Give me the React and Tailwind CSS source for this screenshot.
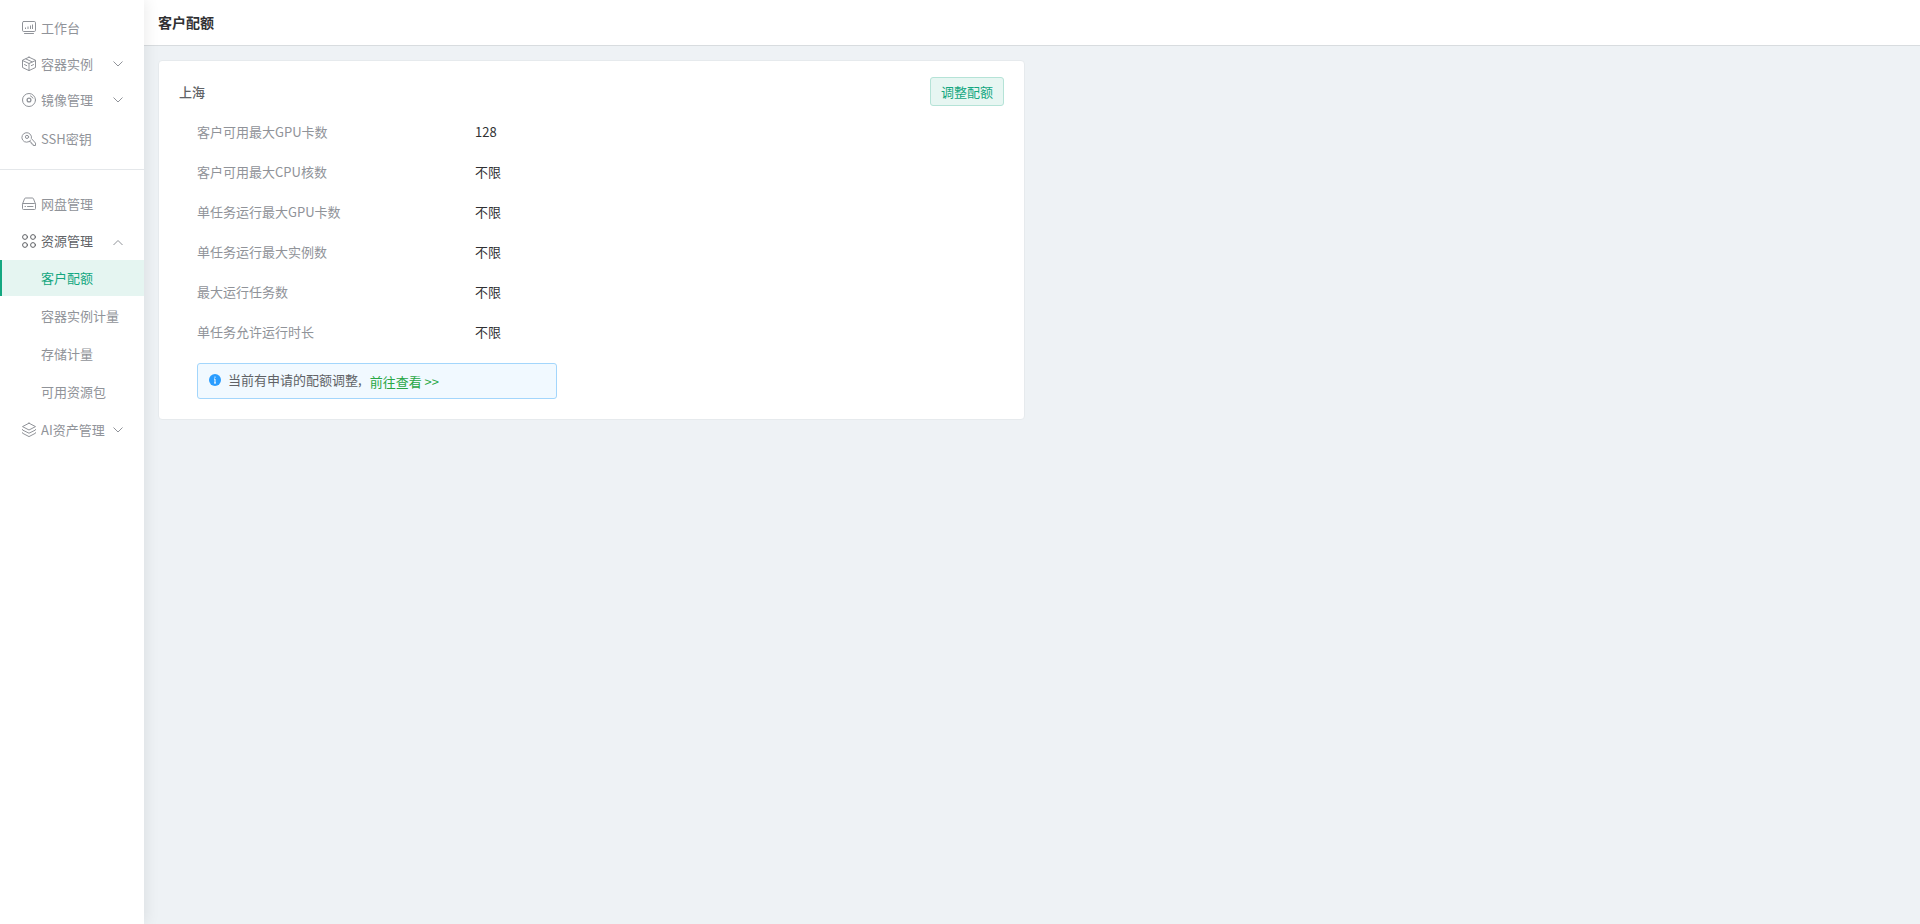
import { useState } from "react";

const svgProps = {
  width: 16,
  height: 16,
  viewBox: "0 0 16 16",
  fill: "none",
  stroke: "currentColor",
  strokeLinecap: "round",
  strokeLinejoin: "round",
  "aria-hidden": true,
  className: "shrink-0",
};

const WorkbenchIcon = () => (
  <svg {...svgProps}>
    <rect x="1.5" y="1.5" width="13" height="10" rx="1.2" />
    <path d="M3.5 13.5h9" />
    <path d="M4.5 7.5v1.5M7 6.5v2.5M9.5 5.5v3.5M11.5 4.5v4.5" strokeLinecap="butt" />
  </svg>
);

const BoxIcon = () => (
  <svg {...svgProps}>
    <path d="M8 1.2l6.5 3v7.3L8 14.6l-6.5-3.1V4.2L8 1.2z" />
    <path d="M1.5 4.5L8 7.5l6.5-3M8 7.5v7" />
    <path d="M5 3l6 2.8M3.5 8.6l2.2 1M12.5 8.6l-2.2 1" />
  </svg>
);

const DiscIcon = () => (
  <svg {...svgProps}>
    <circle cx="8" cy="8" r="6.5" />
    <circle cx="8" cy="8" r="1.9" strokeWidth="1.3" />
    <path d="M9.5 3.9a4.4 4.4 0 0 1 2.4 2.2" />
  </svg>
);

const KeyIcon = () => (
  <svg {...svgProps}>
    <path d="M9.6 9.3A4.8 4.8 0 1 1 10.4 7.5l4.1 4.6v2.4h-2.3l-.3-1.5-1.5-.2-.2-1.6-1.9-.7" />
    <circle cx="6" cy="5.9" r="1.6" />
  </svg>
);

const DiskIcon = () => (
  <svg {...svgProps}>
    <path d="M1.5 8l2-5.2c.2-.6.6-.8 1.2-.8h6.6c.6 0 1 .2 1.2.8l2 5.2" />
    <rect x="1.5" y="7.5" width="13" height="6" rx="1" />
    <path d="M4 10.5h.5M6.5 10.5H12" />
  </svg>
);

const ResourceIcon = () => (
  <svg {...svgProps}>
    <circle cx="4" cy="4" r="2.4" />
    <circle cx="12" cy="4" r="2.4" />
    <circle cx="4" cy="12" r="2.4" />
    <circle cx="12" cy="12" r="2.4" />
  </svg>
);

const LayersIcon = () => (
  <svg {...svgProps}>
    <path d="M8 1.2l6.5 3.4L8 8 1.5 4.6 8 1.2z" />
    <path d="M1.5 7.6v.4L8 11.2 14.5 8v-.4M1.5 10.8v.4L8 14.6l6.5-3.4v-.4" />
  </svg>
);

const Chevron = ({ open }) => (
  <svg
    width="12"
    height="12"
    viewBox="0 0 12 12"
    fill="none"
    stroke="currentColor"
    aria-hidden="true"
    className="shrink-0"
  >
    <path d={open ? "M1.5 10L6 5.5l4.5 4.5" : "M1.5 3.5L6 8l4.5-4.5"} />
  </svg>
);

const resourceLinks = ["客户配额", "容器实例计量", "存储计量", "可用资源包"];

const quotas = [
  { label: "客户可用最大GPU卡数", value: "128" },
  { label: "客户可用最大CPU核数", value: "不限" },
  { label: "单任务运行最大GPU卡数", value: "不限" },
  { label: "单任务运行最大实例数", value: "不限" },
  { label: "最大运行任务数", value: "不限" },
  { label: "单任务允许运行时长", value: "不限" },
];

function NavLink({ icon, label }) {
  return (
    <a href="#" className="flex h-9 items-center gap-1 pl-[21px] hover:text-[#606266]">
      {icon}
      <span>{label}</span>
    </a>
  );
}

function NavGroup({ icon, label, open, onToggle }) {
  return (
    <button
      type="button"
      aria-expanded={!!open}
      onClick={onToggle}
      className={`flex h-9 w-full cursor-pointer items-center gap-1 pl-[21px] pr-5 ${
        open ? "text-[#606266]" : ""
      }`}
    >
      {icon}
      <span className="flex-1 whitespace-nowrap text-left">{label}</span>
      <span className="text-[#909399]">
        <Chevron open={open} />
      </span>
    </button>
  );
}

function Sidebar() {
  const [open, setOpen] = useState(true);
  const [active, setActive] = useState("客户配额");

  return (
    <nav className="z-10 w-36 shrink-0 bg-white pt-2.5 text-[#909399] shadow-[2px_0_14px_rgba(0,0,0,0.08)]">
      <NavLink icon={<WorkbenchIcon />} label="工作台" />
      <NavGroup icon={<BoxIcon />} label="容器实例" />
      <NavGroup icon={<DiscIcon />} label="镜像管理" />
      <div className="pt-[3px]">
        <NavLink icon={<KeyIcon />} label="SSH密钥" />
      </div>
      <hr className="mt-3 mb-4 border-[#e4e7ea]" />
      <div className="flex flex-col gap-px">
        <NavLink icon={<DiskIcon />} label="网盘管理" />
        <NavGroup
          icon={<ResourceIcon />}
          label="资源管理"
          open={open}
          onToggle={() => setOpen(!open)}
        />
      </div>
      {open && (
        <div className="mt-px mb-0.5 flex flex-col gap-0.5">
          {resourceLinks.map((name) => (
            <a
              key={name}
              href="#"
              onClick={() => setActive(name)}
              className={`flex h-9 items-center border-l-2 pl-[39px] ${
                active === name
                  ? "border-[#13a780] bg-[#e5f5f1] text-[#13a780]"
                  : "border-transparent"
              }`}
            >
              {name}
            </a>
          ))}
        </div>
      )}
      <NavGroup icon={<LayersIcon />} label="AI资产管理" />
    </nav>
  );
}

function QuotaCard() {
  return (
    <section className="rounded border border-[#e6eaed] bg-white px-5 pt-4 pb-5">
      <div className="flex items-center justify-between">
        <h2 className="font-medium text-[#606266]">上海</h2>
        <button
          type="button"
          className="h-[29px] cursor-pointer rounded-[3px] border border-[#b5e3d7] bg-[#e7f6f2] px-2.5 text-[#13a780]"
        >
          调整配额
        </button>
      </div>
      <div className="pt-1.5 pl-[18px]">
        <dl>
          {quotas.map((q) => (
            <div key={q.label} className="flex h-10 items-center">
              <dt className="w-[278px] text-[#909399]">{q.label}</dt>
              <dd className="text-[#303133]">{q.value}</dd>
            </div>
          ))}
        </dl>
        <div className="mt-[11px] flex h-9 w-[360px] items-center rounded-[3px] border border-[#a3d6fc] bg-[#f1f9ff] pb-0.5 pl-[11px]">
          <svg width="12" height="12" viewBox="0 0 12 12" aria-hidden="true" className="shrink-0">
            <circle cx="6" cy="6" r="6" fill="#2a9dff" />
            <path d="M5 5h1v4M6 2.6v1.2M5 9h2" stroke="#fff" fill="none" />
          </svg>
          <p className="ml-[7px] text-[#606266]">当前有申请的配额调整,</p>
          <a href="#" className="ml-2 pt-1 text-[#28a745] hover:underline">
            前往查看 &gt;&gt;
          </a>
        </div>
      </div>
    </section>
  );
}

export default function App() {
  return (
    <div className="flex min-h-screen bg-[#eef2f5] font-['Noto_Sans_CJK_SC',sans-serif] text-[13px] leading-5">
      <Sidebar />
      <div className="min-w-0 flex-1">
        <header className="flex h-[46px] items-center border-b border-[#d8dcdf] bg-white px-3.5 pb-0.5">
          <h1 className="text-sm font-bold text-[#303133]">客户配额</h1>
        </header>
        <main className="grid grid-cols-2 gap-3.5 p-3.5">
          <QuotaCard />
        </main>
      </div>
    </div>
  );
}
